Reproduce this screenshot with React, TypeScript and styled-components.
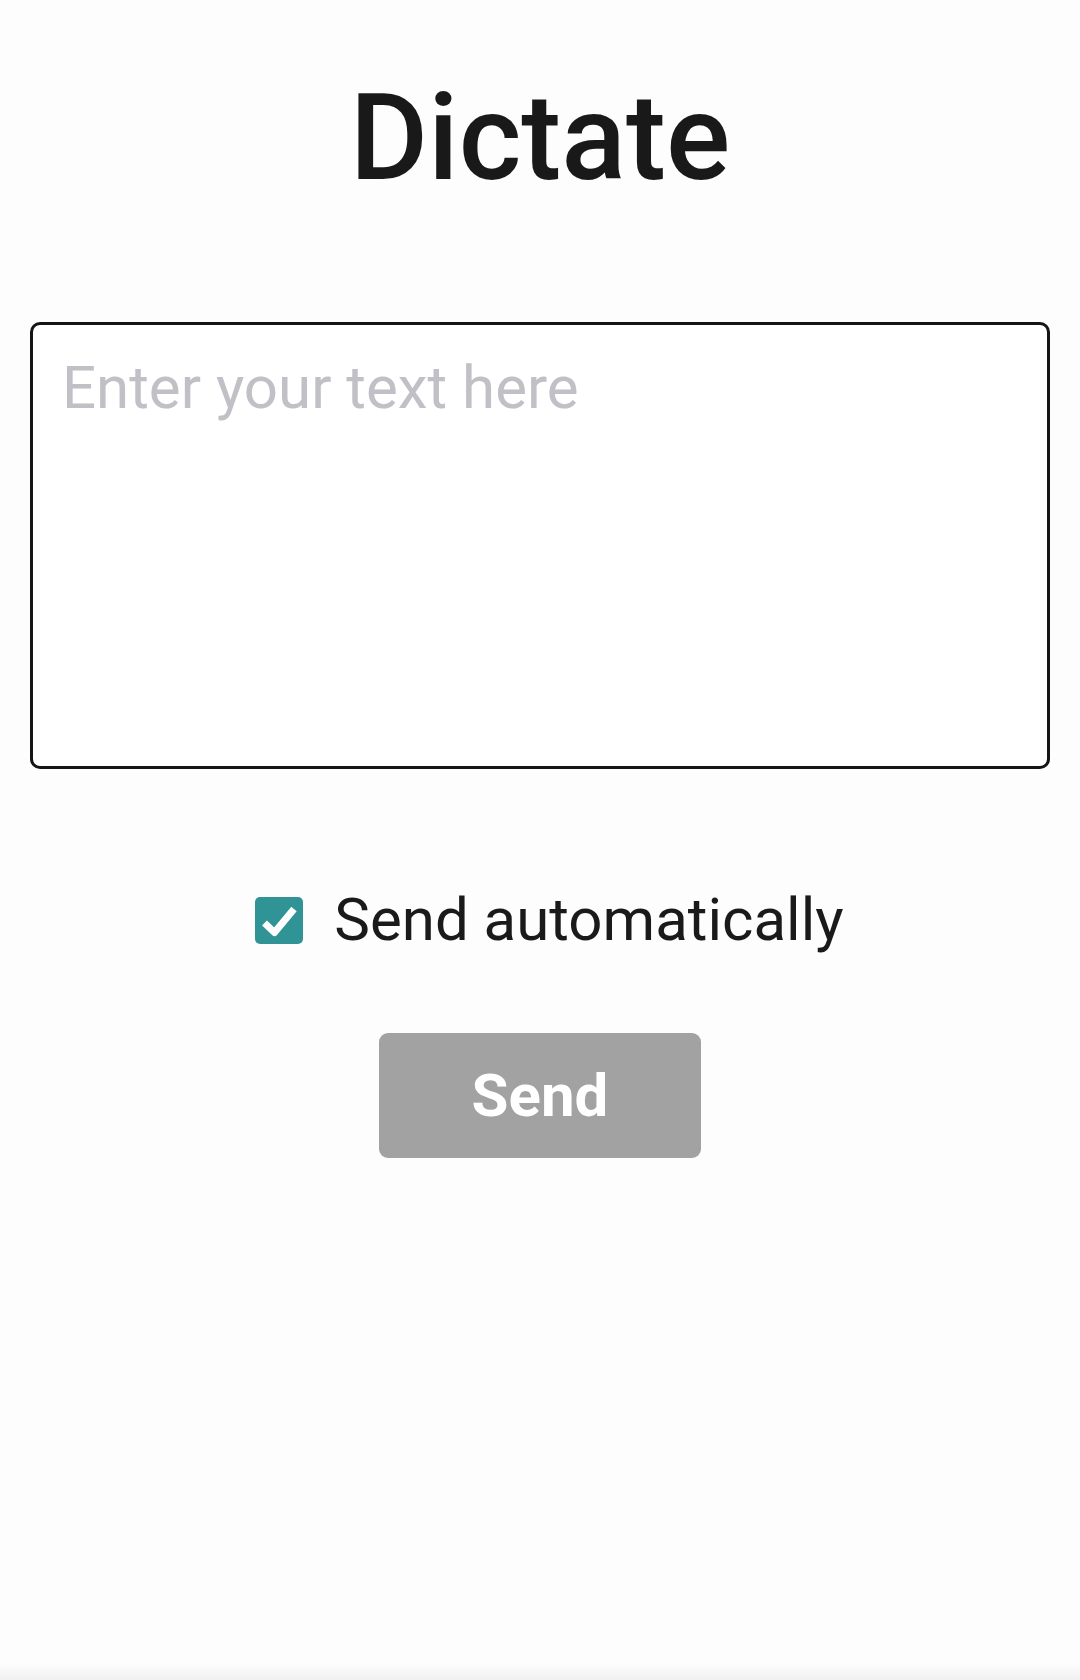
import React, { useState } from "react";
import styled, { createGlobalStyle } from "styled-components";

const GlobalStyle = createGlobalStyle`
  html, body {
    margin: 0;
    padding: 0;
    min-height: 1680px;
  }
  body {
    font-family: Roboto, "Liberation Sans", Arial, sans-serif;
    background: linear-gradient(to bottom, #fdfdfd 0, #fdfdfd 1664px, #f0f0f0 1680px);
  }
  * { box-sizing: border-box; }
`;

const Page = styled.main`
  display: flex;
  flex-direction: column;
  align-items: center;
  padding: 0 30px;
  min-height: 1680px;
`;

const Title = styled.h1`
  margin: 78px 0 0;
  font-size: 120px;
  line-height: 120px;
  font-weight: 500;
  color: #191919;
  letter-spacing: 0;
`;

const TextBox = styled.textarea`
  margin-top: 124px;
  width: 100%;
  height: 447px;
  border: 3px solid #151515;
  border-radius: 10px;
  background: #ffffff;
  padding: 27px 29px;
  font-family: Roboto, "Liberation Sans", Arial, sans-serif;
  font-size: 60px;
  line-height: 72px;
  color: #1a1a1a;
  resize: none;
  outline: none;

  &::placeholder {
    color: #c0c0c6;
  }
`;

const AutoRow = styled.label`
  margin-top: 115px;
  display: flex;
  align-items: center;
  gap: 31px;
  padding-left: 19px;
  cursor: pointer;
`;

const Box = styled.span<{ $checked: boolean }>`
  width: 48px;
  height: 47px;
  border-radius: 5px;
  background: ${(p) => (p.$checked ? "#309496" : "transparent")};
  border: ${(p) => (p.$checked ? "none" : "3px solid #555")};
  display: flex;
  align-items: center;
  justify-content: center;
  flex: none;
`;

const HiddenInput = styled.input`
  position: absolute;
  opacity: 0;
  width: 0;
  height: 0;
`;

const RowText = styled.span`
  font-size: 60px;
  line-height: 72px;
  color: #1a1a1a;
  font-weight: 400;
`;

const SendButton = styled.button`
  margin-top: 77px;
  width: 322px;
  height: 125px;
  border: none;
  border-radius: 9px;
  background: #a2a2a2;
  color: #ffffff;
  font-family: Roboto, "Liberation Sans", Arial, sans-serif;
  font-size: 60px;
  font-weight: 700;
  display: flex;
  align-items: center;
  justify-content: center;
  padding: 0;
  cursor: default;
`;

export default function App() {
  const [text, setText] = useState("");
  const [auto, setAuto] = useState(true);

  return (
    <>
      <GlobalStyle />
      <Page>
        <Title>Dictate</Title>
        <TextBox
          placeholder="Enter your text here"
          value={text}
          onChange={(e) => setText(e.target.value)}
        />
        <AutoRow>
          <HiddenInput
            type="checkbox"
            checked={auto}
            onChange={(e) => setAuto(e.target.checked)}
          />
          <Box $checked={auto}>
            {auto && (
              <svg width="48" height="47" viewBox="0 0 48 47">
                <path
                  d="M9.5 26 L19.5 35.5 L39 12"
                  fill="none"
                  stroke="#ffffff"
                  strokeWidth="7"
                  strokeLinejoin="round"
                />
              </svg>
            )}
          </Box>
          <RowText>Send automatically</RowText>
        </AutoRow>
        <SendButton disabled>Send</SendButton>
      </Page>
    </>
  );
}
